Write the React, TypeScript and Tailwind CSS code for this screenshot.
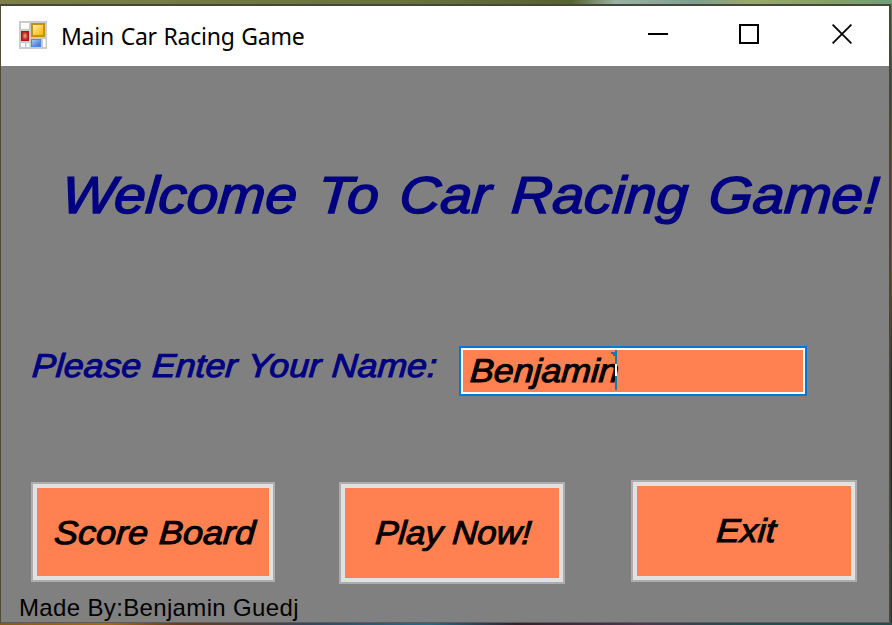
import React from "react";

type LabelProps = { text: string; className: string };

// Slanted, slightly widened sans lettering used across the form.
function Lettering({ text, className }: LabelProps) {
  return (
    <span
      className={`block whitespace-nowrap font-['Liberation_Sans',Arial,sans-serif] italic ${className}`}
    >
      {text}
    </span>
  );
}

function AppIcon() {
  return (
    <svg width="28" height="28" viewBox="0 0 28 28" className="relative -top-px shrink-0">
      <defs>
        <linearGradient id="gold" x1="0" y1="0" x2="1" y2="1">
          <stop offset="0" stopColor="#fff0a8" />
          <stop offset="0.5" stopColor="#fbd248" />
          <stop offset="1" stopColor="#f2b70d" />
        </linearGradient>
        <radialGradient id="ruby">
          <stop offset="0" stopColor="#eda49a" />
          <stop offset="1" stopColor="#bd2119" />
        </radialGradient>
        <linearGradient id="azure" x1="0" y1="0" x2="1" y2="1">
          <stop offset="0" stopColor="#a3c6fa" />
          <stop offset="1" stopColor="#3d70d5" />
        </linearGradient>
      </defs>
      <rect width="28" height="28" fill="#cbcbcb" />
      <rect x="2" y="2" width="8" height="6" fill="#fff" />
      <rect x="2" y="22" width="4" height="4" fill="#fff" />
      <rect x="7.5" y="22" width="3" height="4" fill="#fff" />
      <rect x="24" y="18" width="2.5" height="8" fill="#fff" />
      <rect x="2" y="10" width="8" height="10" fill="#a51a14" />
      <rect x="3" y="11" width="6" height="8" fill="url(#ruby)" />
      <rect x="12" y="2" width="14" height="14" fill="#c29208" />
      <rect x="14" y="4" width="10" height="10" fill="url(#gold)" />
      <rect x="12" y="18" width="10" height="8" fill="#5485df" />
      <rect x="13" y="19" width="8" height="6" fill="url(#azure)" />
    </svg>
  );
}

function TitleBar() {
  return (
    <header className="flex h-[60px] shrink-0 items-center bg-white pl-[18px] pr-[37px]">
      <AppIcon />
      <h1 className="ml-[14px] whitespace-nowrap font-['Noto_Sans','Open_Sans',sans-serif] text-[23px] leading-8 tracking-[-0.25px] text-black [word-spacing:1px]">
        Main Car Racing Game
      </h1>
      <div className="ml-auto flex items-center gap-[71px] pb-1">
        <svg width="20" height="20" viewBox="0 0 20 20">
          <path d="M0 10H20" stroke="#000" strokeWidth="2" />
        </svg>
        <svg width="20" height="20" viewBox="0 0 20 20">
          <rect x="1" y="1" width="18" height="18" fill="none" stroke="#000" strokeWidth="2" />
        </svg>
        <svg width="20" height="20" viewBox="0 0 20 20" className="ml-0.5">
          <path d="M.6.6 19.4 19.4M19.4.6.6 19.4" fill="none" stroke="#000" strokeWidth="1.8" />
        </svg>
      </div>
    </header>
  );
}

function GameButton({ text, box, label }: { text: string; box: string; label: string }) {
  return (
    <button
      className={`flex shrink-0 justify-start border-2 border-[#adadad] bg-[#ff8050] shadow-[inset_0_0_0_4px_#e1e1e1] ${box}`}
    >
      <Lettering
        text={text}
        className={`text-[33px] leading-[38px] text-black [-webkit-text-stroke:1px_#000] ${label}`}
      />
    </button>
  );
}

export default function App() {
  return (
    <div className="h-[625px] w-[892px] overflow-hidden bg-[linear-gradient(90deg,#8a5a10_0%,#a9690b_12%,#6a3d1c_20%,#38485e_35%,#246b87_48%,#33222c_58%,#4d3850_72%,#234f50_84%,#1f4e4c_100%)]">
      <div className="h-[623px] w-full bg-[linear-gradient(180deg,#5d8050_0%,#3d5340_14%,#7b4f15_27%,#805318_42%,#292b28_60%,#25231f_76%,#214441_90%,#252d2c_100%)]">
        <div className="h-1 w-full bg-[linear-gradient(90deg,#7c8046_0%,#68733d_45%,#55632f_64%,#9ab2a0_69%,#7e9f91_78%,#99a96a_84%,#829f65_94%,#6fa079_100%)]" />
        <div className="flex h-[619px] w-[891px] flex-col border-l border-r-2 border-t-2 border-b border-[#46473a] bg-[#808080] [border-bottom-color:#5c5c5c] [border-left-color:#514b35]">
          <TitleBar />
          <main className="flex flex-1 flex-col">
            <Lettering
              text="Welcome To Car Racing Game!"
              className="ml-[59px] mt-[99px] h-[60px] w-[780px] origin-bottom-left text-[52px] leading-[60px] text-[#000080] [-webkit-text-stroke:1.5px_#000080] [transform:skewX(-4deg)_scaleX(1.09)] [word-spacing:4.6px]"
            />
            <div className="mt-[121px] flex h-[50px] items-start">
              <Lettering
                text="Please Enter Your Name:"
                className="ml-[30px] mt-px h-[38px] w-[428px] origin-bottom-left text-[33px] leading-[38px] text-[#000080] [-webkit-text-stroke:1px_#000080] [transform:skewX(-4deg)_scaleX(1.08)] [word-spacing:1px]"
              />
              <div className="flex h-[50px] w-[348px] shrink-0 border-2 border-[#0078d7] bg-[#ff8050] pl-[8px] pt-[3px] shadow-[inset_0_0_0_2px_#fff]">
                <Lettering
                  text="Benjamin"
                  className="mt-px h-[38px] w-[146px] origin-bottom-left text-[33px] leading-[38px] text-black [-webkit-text-stroke:1px_#000] [transform:skewX(-4deg)_scaleX(1.08)]"
                />
                <svg width="6" height="40" viewBox="0 0 6 40" className="relative -left-1 -top-px z-10 shrink-0">
                  <path d="M0 2H4V0H6V40H4V6H2V4H0Z" fill="#087fae" />
                  <path d="M4 14H6V26H4Z" fill="#fff" />
                </svg>
              </div>
            </div>
            <div className="mt-[84px] flex h-[104px] items-start">
              <GameButton
                text="Score Board"
                box="ml-[30px] mt-0.5 h-[100px] w-[244px] pl-[18px] pt-[30px]"
                label="origin-bottom-left [transform:skewX(-4deg)_scaleX(1.09)] [word-spacing:1px]"
              />
              <GameButton
                text="Play Now!"
                box="ml-[64px] mt-0.5 h-[102px] w-[226px] pl-[31px] pt-[30px]"
                label="origin-bottom-left [transform:skewX(-4deg)_scaleX(1.05)]"
              />
              <GameButton
                text="Exit"
                box="ml-[66px] h-[102px] w-[226px] pl-[80px] pt-[30px]"
                label="origin-bottom-left [transform:skewX(-4deg)_scaleX(1.08)]"
              />
            </div>
            <p className="ml-[18px] mt-[10px] whitespace-nowrap font-['Liberation_Sans',Arial,sans-serif] text-[24px] leading-7 tracking-[0.35px] text-black">
              Made By:Benjamin Guedj
            </p>
          </main>
        </div>
      </div>
    </div>
  );
}
